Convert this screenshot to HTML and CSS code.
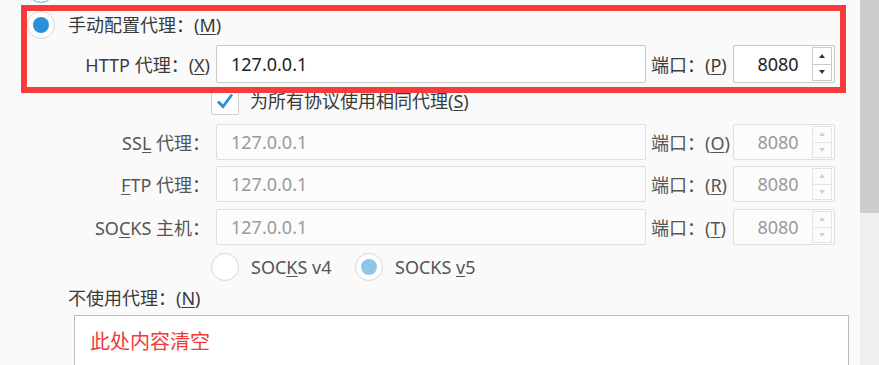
FILE: index.html
```html
<!DOCTYPE html>
<html lang="zh-CN">

<head>
  <meta charset="UTF-8">
  <meta name="viewport" content="width=device-width, initial-scale=1.0">
  <title>连接设置</title>
  <link rel="stylesheet" href="styles.css">
</head>

<body>
  <div class="window">
    <div class="content">
      <div class="radio radio--ghost"></div>

      <div class="mode-row">
        <span class="radio radio--on"></span>
        <span class="label">手动配置代理：(<u>M</u>)</span>
      </div>

      <div class="form-row form-row--http">
        <label class="row-label">HTTP 代理：(<u>X</u>)</label>
        <div class="field">127.0.0.1</div>
        <label class="port-label">端口：(<u>P</u>)</label>
        <div class="spin">
          <span class="spin-value">8080</span>
          <span class="spin-btns">
            <span class="spin-btn"><i class="arrow arrow--up"></i></span>
            <span class="spin-btn"><i class="arrow arrow--down"></i></span>
          </span>
        </div>
      </div>

      <div class="check-row">
        <span class="checkbox">
          <svg width="20" height="18" viewBox="0 0 20 18">
            <path d="M3 9.5 L8 14.5 L17 2.5" fill="none" stroke="#2a8fd6" stroke-width="2.8" />
          </svg>
        </span>
        <span class="label">为所有协议使用相同代理(<u>S</u>)</span>
      </div>

      <div class="form-row form-row--first disabled">
        <label class="row-label">SS<u>L</u> 代理：</label>
        <div class="field">127.0.0.1</div>
        <label class="port-label">端口：(<u>O</u>)</label>
        <div class="spin">
          <span class="spin-value">8080</span>
          <span class="spin-btns">
            <span class="spin-btn"><i class="arrow arrow--up"></i></span>
            <span class="spin-btn"><i class="arrow arrow--down"></i></span>
          </span>
        </div>
      </div>

      <div class="form-row disabled">
        <label class="row-label"><u>F</u>TP 代理：</label>
        <div class="field">127.0.0.1</div>
        <label class="port-label">端口：(<u>R</u>)</label>
        <div class="spin">
          <span class="spin-value">8080</span>
          <span class="spin-btns">
            <span class="spin-btn"><i class="arrow arrow--up"></i></span>
            <span class="spin-btn"><i class="arrow arrow--down"></i></span>
          </span>
        </div>
      </div>

      <div class="form-row form-row--last disabled">
        <label class="row-label">SO<u>C</u>KS 主机：</label>
        <div class="field">127.0.0.1</div>
        <label class="port-label">端口：(<u>T</u>)</label>
        <div class="spin">
          <span class="spin-value">8080</span>
          <span class="spin-btns">
            <span class="spin-btn"><i class="arrow arrow--up"></i></span>
            <span class="spin-btn"><i class="arrow arrow--down"></i></span>
          </span>
        </div>
      </div>

      <div class="socks-row">
        <span class="radio"></span>
        <span class="label muted socks-v4">SOC<u>K</u>S v4</span>
        <span class="radio radio--dim"></span>
        <span class="label muted">SOCKS <u>v</u>5</span>
      </div>

      <div class="no-proxy">不使用代理：(<u>N</u>)</div>

      <div class="textarea">此处内容清空</div>

      <div class="highlight"></div>
    </div>

    <div class="scrollbar">
      <div class="scrollbar__thumb"></div>
    </div>
  </div>
</body>

</html>
```

FILE: styles.css
```css
body {
  margin: 0;
  padding: 0;
  background-color: #fafafa;
  font-family: "Noto Sans", "Noto Sans CJK SC", sans-serif;
  font-size: 18px;
  color: #3a3a3a;
  overflow: hidden;
}

u {
  text-decoration: underline;
  text-underline-offset: 2px;
  text-decoration-thickness: 1px;
}

.window {
  display: flex;
  width: 879px;
  height: 365px;
  overflow: hidden;
}

.content {
  position: relative;
  width: 860px;
  display: flex;
  flex-direction: column;
}

.content > * {
  flex-shrink: 0;
}

.scrollbar {
  width: 19px;
  background-color: #f0f0f0;
}

.scrollbar__thumb {
  height: 213px;
  background-color: #cdcdcd;
}

/* radios and checkbox */
.radio {
  width: 28px;
  height: 28px;
  box-sizing: border-box;
  border: 1px solid #d6d6d6;
  border-radius: 50%;
  background-color: #fff;
  display: flex;
  align-items: center;
  justify-content: center;
  flex-shrink: 0;
}

.radio--ghost {
  margin: -25px 0 0 27px;
  border-color: #6fb2e3;
}

.radio--on::after,
.radio--dim::after {
  content: "";
  width: 16px;
  height: 16px;
  border-radius: 50%;
  background-color: #2a8fd6;
}

.radio--dim::after {
  background-color: #8ec5e8;
}

.mode-row {
  display: flex;
  align-items: center;
  gap: 13px;
  margin-top: 8px;
  padding-left: 27px;
  height: 28px;
}

.label {
  line-height: 28px;
  white-space: nowrap;
}

.muted {
  color: #555;
}

.check-row {
  display: flex;
  align-items: center;
  gap: 11px;
  margin-top: 4px;
  padding-left: 211px;
  height: 28px;
}

.checkbox {
  width: 28px;
  height: 28px;
  box-sizing: border-box;
  border: 1px solid #cfcfcf;
  border-radius: 2px;
  background-color: #fff;
  display: flex;
  align-items: center;
  justify-content: center;
}

/* form rows */
.form-row {
  display: grid;
  grid-template-columns: 216px 430px 87px 102px;
  height: 36px;
  margin-top: 6px;
}

.form-row--http {
  height: 38px;
}

.form-row--first {
  margin-top: 9px;
}

.form-row--last {
  margin-top: 7px;
}

.row-label {
  text-align: right;
  padding-right: 6px;
  align-self: center;
  white-space: nowrap;
  color: #3c3c3c;
}

.port-label {
  padding-left: 5px;
  align-self: center;
  white-space: nowrap;
  color: #3c3c3c;
}

.field {
  box-sizing: border-box;
  border: 1px solid #c9c9c9;
  border-radius: 2px;
  background-color: #fff;
  padding-left: 14px;
  display: flex;
  align-items: center;
  color: #222;
}

.spin {
  box-sizing: border-box;
  border: 1px solid #c9c9c9;
  border-radius: 2px;
  background-color: #fff;
  display: flex;
  color: #222;
}

.spin-value {
  flex: 1;
  text-align: center;
  padding-left: 10px;
  align-self: center;
}

.spin-btns {
  width: 20px;
  margin: 1px 2px 1px 0;
  display: flex;
  flex-direction: column;
}

.spin-btn {
  flex: 1;
  border: 1px solid #c9c9c9;
  display: flex;
  align-items: center;
  justify-content: center;
}

.spin-btn + .spin-btn {
  border-top: 0;
}

.arrow {
  width: 0;
  height: 0;
  border-left: 3.5px solid transparent;
  border-right: 3.5px solid transparent;
}

.arrow--up {
  border-bottom: 4px solid #333;
}

.arrow--down {
  border-top: 4px solid #333;
}

.disabled .row-label,
.disabled .port-label {
  color: #555;
}

.disabled .field,
.disabled .spin {
  border-color: #dedede;
  background-color: #fcfcfc;
  color: #9a9a9a;
}

.disabled .spin-btn {
  border-color: #e4e4e4;
}

.disabled .arrow--up {
  border-bottom-color: #d0d0d0;
}

.disabled .arrow--down {
  border-top-color: #d0d0d0;
}

.socks-row {
  display: flex;
  align-items: center;
  margin-top: 8px;
  padding-left: 211px;
  height: 28px;
}

.socks-row .label {
  margin-left: 12px;
}

.socks-v4 {
  width: 92px;
  padding-right: 12px;
}

.no-proxy {
  margin-top: 7px;
  padding-left: 68px;
  height: 20px;
  line-height: 20px;
}

.textarea {
  margin: 7px 0 0 74px;
  width: 775px;
  height: 80px;
  box-sizing: border-box;
  border: 1px solid #bdbdbd;
  background-color: #fff;
  padding: 11px 0 0 15px;
  font-family: "Noto Sans CJK SC", sans-serif;
  font-size: 20px;
  line-height: 28px;
  color: #f23a3a;
}

/* red annotation frame drawn over the first two rows */
.highlight {
  position: absolute;
  left: 21px;
  top: 5px;
  width: 825px;
  height: 88px;
  box-sizing: border-box;
  border: 6px solid #f73a3a;
  pointer-events: none;
}
```
